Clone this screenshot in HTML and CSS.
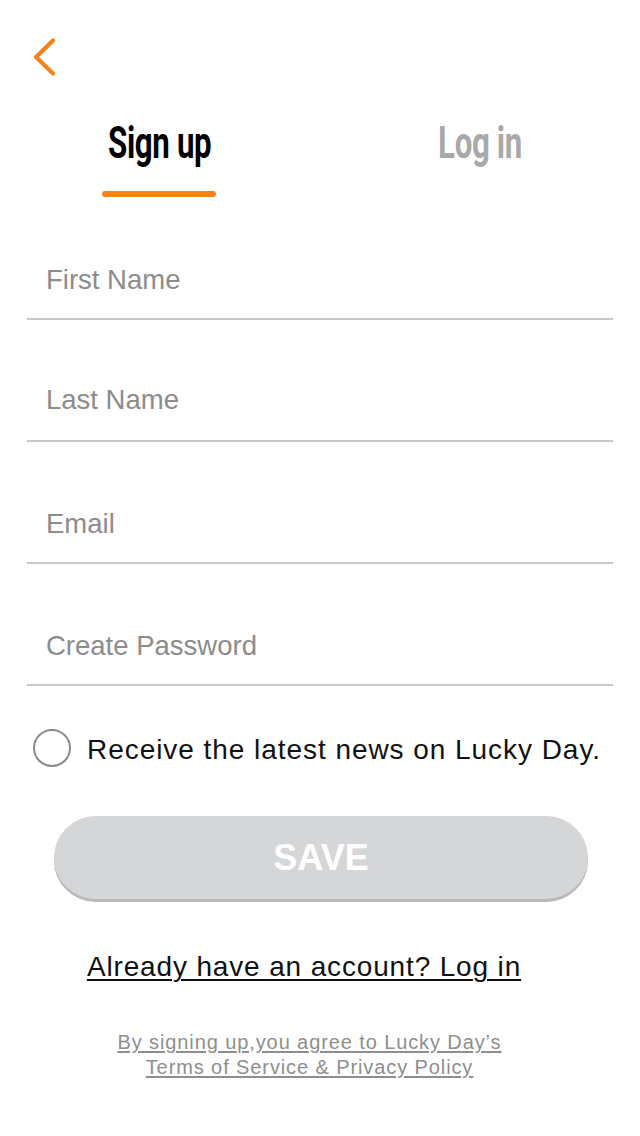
FILE: index.html
```html
<!DOCTYPE html>
<html lang="en">
<head>
<meta charset="utf-8">
<title>Sign up</title>
<link rel="stylesheet" href="styles.css">
</head>
<body>
<div class="screen">
  <header class="top">
    <a class="back" href="#" aria-label="Back">
      <svg width="24" height="38" viewBox="0 0 24 38"><polyline points="20,2.5 3,19 20,35.5" fill="none" stroke="#f7821b" stroke-width="4.2" stroke-linecap="round" stroke-linejoin="round"/></svg>
    </a>
  </header>
  <nav class="tabs">
    <div class="tab active"><span class="tab-label">Sign up</span><span class="tab-bar"></span></div>
    <div class="tab"><span class="tab-label">Log in</span></div>
  </nav>
  <form class="form">
    <div class="field"><span class="placeholder">First Name</span></div>
    <div class="field field-tall"><span class="placeholder">Last Name</span></div>
    <div class="field"><span class="placeholder">Email</span></div>
    <div class="field"><span class="placeholder">Create Password</span></div>
    <label class="check-row"><span class="circle"></span><span class="check-text">Receive the latest news on Lucky Day.</span></label>
    <div class="btn-wrap"><button type="button" class="save">SAVE</button></div>
  </form>
  <p class="already"><a href="#">Already have an account? Log in</a></p>
  <p class="terms"><a href="#">By signing up,you agree to Lucky Day’s<br>Terms of Service &amp; Privacy Policy</a></p>
</div>
</body>
</html>
```
FILE: styles.css
```css
html, body {
  margin: 0;
  padding: 0;
  background: #ffffff;
}
body {
  font-family: "Liberation Sans", Arial, sans-serif;
}
.screen {
  width: 640px;
  height: 1136px;
  overflow: hidden;
}
.top {
  padding: 38px 0 0 33px;
  height: 38px;
}
.back {
  display: block;
  width: 24px;
  height: 38px;
}
.back svg {
  display: block;
}
.tabs {
  display: flex;
  height: 122px;
}
.tab {
  flex: 1;
  display: flex;
  flex-direction: column;
  align-items: center;
  padding-top: 45px;
}
.tab-label {
  display: inline-block;
  font-family: Roboto, "Liberation Sans", sans-serif;
  font-weight: 700;
  font-size: 44px;
  line-height: 44px;
  color: #a9a9a9;
  transform: scaleX(0.71);
  letter-spacing: -0.5px;
}
.tab.active .tab-label {
  color: #000000;
}
.tab-bar {
  display: block;
  width: 114px;
  height: 6px;
  border-radius: 3px;
  background: #f7821b;
  margin-top: 26px;
  margin-left: -2px;
}
.form {
  margin: 0;
}
.field {
  box-sizing: border-box;
  height: 122px;
  margin: 0 27px;
  border-bottom: 2px solid #c8c8c8;
  display: flex;
  align-items: flex-end;
  padding: 0 0 22px 19px;
}
.field-tall {
  padding-bottom: 24px;
}
.placeholder {
  font-size: 27.5px;
  line-height: 32px;
  color: #8c8c8c;
}
.check-row {
  display: flex;
  align-items: center;
  margin: 43px 0 0 33px;
  height: 38px;
}
.circle {
  box-sizing: border-box;
  width: 38px;
  height: 38px;
  border: 2px solid #8a8a8a;
  border-radius: 50%;
  flex: none;
}
.check-text {
  margin-left: 16px;
  font-size: 28px;
  letter-spacing: 0.95px;
  color: #111111;
  line-height: 32px;
  position: relative;
  top: 2px;
}
.btn-wrap {
  padding: 49px 52px 0 54px;
}
.save {
  display: block;
  width: 534px;
  height: 83px;
  border: 0;
  border-radius: 42px;
  background: #d5d6d8;
  box-shadow: 0 3px 0 #b9b9bb;
  color: #ffffff;
  font-family: "Liberation Sans", Arial, sans-serif;
  font-weight: 700;
  font-size: 36px;
  padding: 0;
  cursor: pointer;
}
.already {
  margin: 50px 32px 0 0;
  text-align: center;
  font-size: 28px;
  line-height: 36px;
  letter-spacing: 0.85px;
}
.already a {
  color: #111111;
  text-decoration: underline;
  text-decoration-thickness: 2px;
  text-underline-offset: 3px;
}
.terms {
  margin: 45px 21px 0 0;
  text-align: center;
  font-size: 20px;
  line-height: 25px;
  letter-spacing: 0.9px;
}
.terms a {
  color: #8e8e8e;
  text-decoration: underline;
  text-underline-offset: 2px;
}
```
